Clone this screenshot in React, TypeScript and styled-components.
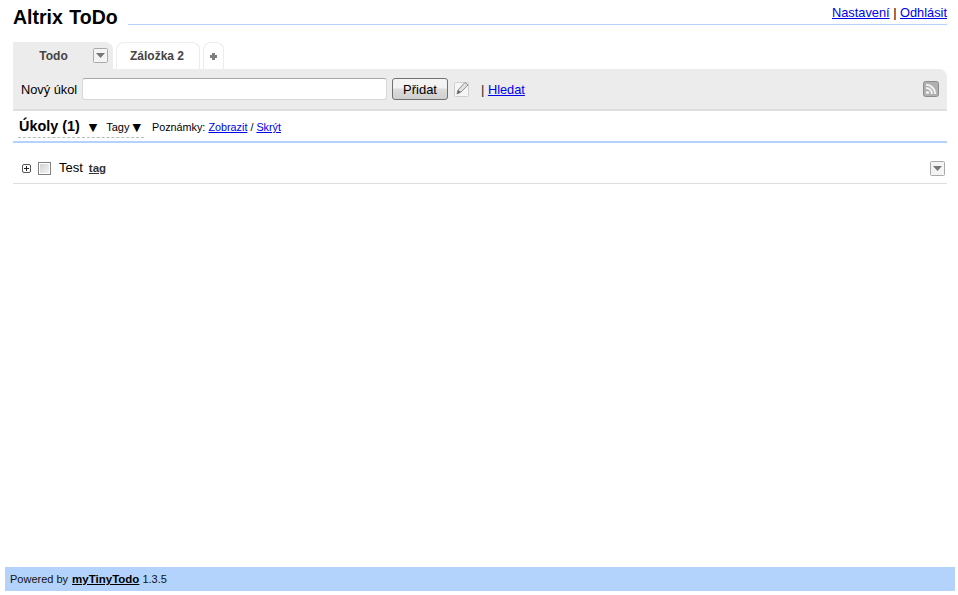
import React from "react"
import styled, { createGlobalStyle } from "styled-components"

const GlobalStyle = createGlobalStyle`
  html, body {
    margin: 0;
    padding: 0;
    background: #ffffff;
  }
  body {
    font-family: "Liberation Sans", Arial, sans-serif;
    font-size: 13px;
    color: #000000;
    overflow: hidden;
  }
  a {
    color: #0000ee;
  }
`

const Page = styled.div`
  display: flex;
  flex-direction: column;
  box-sizing: border-box;
  height: 595px;
  padding: 0 3px 4px 5px;
`

const Wrapper = styled.div`
  flex: 1;
  padding: 0 8px;
`

const Header = styled.div`
  display: flex;
  align-items: flex-start;
  height: 42px;
`

const Title = styled.h1`
  margin: 6px 10px 0 0;
  font-size: 19.5px;
  line-height: 22px;
  font-weight: bold;
  word-spacing: 1px;
`

const TitleLine = styled.div`
  flex: 1;
  height: 24px;
  border-bottom: 1px solid #b3d3fd;
`

const Bar = styled.div`
  position: absolute;
  top: 5px;
  right: 11px;
  font-size: 12.8px;
  line-height: 16px;
  background: #ffffff;
`

const Tabs = styled.div`
  display: flex;
  height: 27px;
  gap: 3px;
`

const Tab = styled.div<{ $active?: boolean; $w: number }>`
  display: flex;
  align-items: center;
  justify-content: center;
  position: relative;
  box-sizing: border-box;
  width: ${(p) => p.$w}px;
  background: ${(p) => (p.$active ? "#ececec" : "#ffffff")};
  border: ${(p) => (p.$active ? "none" : "1px solid #ececec")};
  border-bottom: none;
  border-radius: ${(p) => (p.$active ? "0 8px 0 0" : "8px 8px 0 0")};
  font-size: 12px;
  font-weight: bold;
  color: #444444;
`

const TabTitle = styled.span<{ $shift?: number }>`
  margin-right: ${(p) => p.$shift ?? 0}px;
`

const TabMenu = styled.span`
  position: absolute;
  top: 6px;
  right: 5px;
  display: flex;
`

const Toolbar = styled.div`
  display: flex;
  align-items: center;
  box-sizing: border-box;
  height: 42px;
  padding: 0 8px;
  background: #ececec;
  border-bottom: 2px solid #dedede;
  border-radius: 0 8px 0 0;
  font-size: 12.8px;
`

const TaskLabel = styled.label`
  width: 56px;
  margin-right: 5px;
  white-space: nowrap;
`

const TaskInput = styled.input`
  box-sizing: border-box;
  width: 305px;
  height: 22px;
  padding: 0 3px;
  margin: 0 5px 0 0;
  background: #ffffff;
  border: 1px solid #d8d8d8;
  border-top-color: #a8a8a8;
  border-radius: 3px;
`

const AddButton = styled.button`
  box-sizing: border-box;
  width: 56px;
  height: 22px;
  padding: 0;
  margin-right: 6px;
  font-family: inherit;
  font-size: 13px;
  color: #000000;
  background: linear-gradient(#f4f4f4, #f2f2f2 45%, #dcdcdc 50%, #cfcfcf);
  border: 1px solid #707070;
  border-radius: 3px;
`

const SearchWrap = styled.span`
  margin-left: 11px;
  color: #222222;
`

const Spacer = styled.span`
  flex: 1;
`

const ListHead = styled.div`
  display: flex;
  align-items: flex-start;
  box-sizing: border-box;
  height: 32px;
  padding: 0 3px 0 5px;
  border-bottom: 2px solid #b3d3fd;
`

const Sort = styled.span`
  display: flex;
  align-items: center;
  box-sizing: border-box;
  height: 25px;
  margin-top: 2px;
  padding: 2px 3px 0 1px;
  border-bottom: 1px dashed #bbbbbb;
  white-space: nowrap;
`

const ListTitle = styled.span`
  font-size: 14.4px;
  font-weight: bold;
  margin-right: 9px;
`

const Arrow = styled.span<{ $gap: number }>`
  font-size: 11px;
  margin: 2px ${(p) => p.$gap}px 0 0;
  font-family: "DejaVu Sans", sans-serif;
`

const TagsLabel = styled.span`
  font-size: 11px;
  margin: 2px 3px 0 -1px;
`

const Notes = styled.span`
  margin: 9px 0 0 8px;
  font-size: 10.8px;
  line-height: 14px;
`

const TaskRow = styled.div`
  display: flex;
  align-items: center;
  box-sizing: border-box;
  height: 31px;
  margin-top: 10px;
  padding: 0 2px 0 9px;
  border-bottom: 1px solid #dedede;
`

const Expand = styled.span`
  display: flex;
  margin-right: 7px;
`

const Check = styled.input`
  appearance: none;
  box-sizing: border-box;
  width: 13px;
  height: 13px;
  margin: 0 8px 0 0;
  background: linear-gradient(135deg, #cfcfcf, #f8f8f8);
  border: 1px solid #808080;
  box-shadow: inset 0 0 0 1px #ffffff;
`

const TaskTitle = styled.span`
  font-size: 13px;
  margin: 0 6px 2px 0;
`

const Tag = styled.a`
  font-size: 11.5px;
  font-weight: bold;
  color: #333333;
`

const Footer = styled.div`
  display: flex;
  align-items: center;
  height: 24px;
  padding-left: 5px;
  background: #b3d3fd;
  font-size: 11px;
  color: #111111;
  white-space: pre;
`

const FooterLink = styled.a`
  margin: 0 3px 0 4px;
  font-size: 11.5px;
  font-weight: bold;
  color: #000000;
`

const MenuIcon = () => (
  <svg width="15" height="15" viewBox="0 0 15 15">
    <rect x="0.5" y="0.5" width="14" height="14" rx="1" fill="#f4f4f4" stroke="#aaaaaa" />
    <path d="M3 5h9l-4.5 5z" fill="#777777" />
  </svg>
)

const PlusIcon = () => (
  <svg width="7" height="7" viewBox="0 0 7 7">
    <path d="M2 0h3v2h2v3H5v2H2V5H0V2h2z" fill="#7f7f7f" />
  </svg>
)

const NoteIcon = () => (
  <svg width="16" height="16" viewBox="0 0 16 16">
    <rect x="0.5" y="1.5" width="14" height="14" rx="1" fill="#f6f6f6" stroke="#cfcfcf" />
    <path d="M3 13l1-4 7-7.5 3 2.5-7 7z" fill="#e2e2e2" stroke="#8f8f8f" />
    <path d="M3 13l1-4 3 2z" fill="#666666" />
  </svg>
)

const RssIcon = () => (
  <svg width="16" height="16" viewBox="0 0 16 16">
    <rect x="0.5" y="0.5" width="15" height="15" rx="2" fill="#b0b0b0" stroke="#8c8c8c" />
    <circle cx="4.5" cy="11.5" r="1.6" fill="#f2f2f2" />
    <path d="M3 7a6 6 0 0 1 6 6M3 3.8a9.2 9.2 0 0 1 9.2 9.2" fill="none" stroke="#f2f2f2" strokeWidth="2" />
  </svg>
)

const ExpandIcon = () => (
  <svg width="9" height="9" viewBox="0 0 9 9">
    <rect x="0.5" y="0.5" width="8" height="8" rx="1.5" fill="#ffffff" stroke="#555555" />
    <path d="M2 4.5h5M4.5 2v5" stroke="#222222" />
  </svg>
)

const App = () => {
  return (
    <Page>
      <GlobalStyle />
      <Wrapper>
        <Header>
          <Title>Altrix ToDo</Title>
          <TitleLine />
          <Bar>
            <a href="#">Nastavení</a> | <a href="#">Odhlásit</a>
          </Bar>
        </Header>
        <Tabs>
          <Tab $active $w={100}>
            <TabTitle $shift={19}>Todo</TabTitle>
            <TabMenu>
              <MenuIcon />
            </TabMenu>
          </Tab>
          <Tab $w={84}>
            <TabTitle $shift={2}>Záložka 2</TabTitle>
          </Tab>
          <Tab $w={21}>
            <PlusIcon />
          </Tab>
        </Tabs>
        <Toolbar>
          <TaskLabel>Nový úkol</TaskLabel>
          <TaskInput type="text" />
          <AddButton>Přidat</AddButton>
          <NoteIcon />
          <SearchWrap>
            | <a href="#">Hledat</a>
          </SearchWrap>
          <Spacer />
          <RssIcon />
        </Toolbar>
        <ListHead>
          <Sort>
            <ListTitle>Úkoly (1)</ListTitle>
            <Arrow $gap={10}>▼</Arrow>
            <TagsLabel>Tagy</TagsLabel>
            <Arrow $gap={0}>▼</Arrow>
          </Sort>
          <Notes>
            Poznámky: <a href="#">Zobrazit</a> / <a href="#">Skrýt</a>
          </Notes>
        </ListHead>
        <TaskRow>
          <Expand>
            <ExpandIcon />
          </Expand>
          <Check type="checkbox" />
          <TaskTitle>Test</TaskTitle>
          <Tag href="#">tag</Tag>
          <Spacer />
          <MenuIcon />
        </TaskRow>
      </Wrapper>
      <Footer>
        Powered by<FooterLink href="#">myTinyTodo</FooterLink>1.3.5
      </Footer>
    </Page>
  )
}

export default App
